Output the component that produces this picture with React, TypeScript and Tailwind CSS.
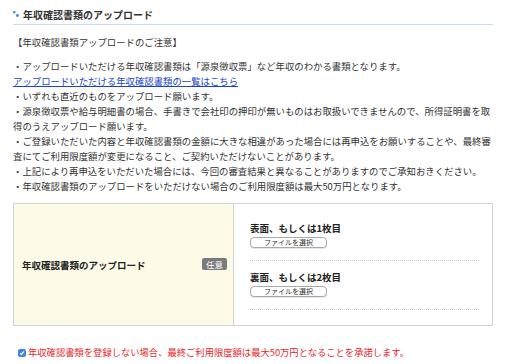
import React from "react";

const notes = [
  "・アップロードいただける年収確認書類は「源泉徴収票」など年収のわかる書類となります。",
  null,
  "・いずれも直近のものをアップロード願います。",
  "・源泉徴収票や給与明細書の場合、手書きで会社印の押印が無いものはお取扱いできませんので、所得証明書を取得のうえアップロード願います。",
  "・ご登録いただいた内容と年収確認書類の金額に大きな相違があった場合には再申込をお願いすることや、最終審査にてご利用限度額が変更になること、ご契約いただけないことがあります。",
  "・上記により再申込をいただいた場合には、今回の審査結果と異なることがありますのでご承知おきください。",
  "・年収確認書類のアップロードをいただけない場合のご利用限度額は最大50万円となります。",
];

function FileRow({ label, last }: { label: string; last?: boolean }) {
  return (
    <div className={last ? "pt-[9px]" : ""}>
      <div className="text-[9.5px] font-bold leading-[14px] text-[#222]">{label}</div>
      <div className="mt-[2px] flex h-[11px] w-[77px] items-center justify-center rounded-[4px] border border-[#aaa] bg-white text-[7px] leading-none text-[#333] shadow-[0_1px_0_#e5e5e5]">
        ファイルを選択
      </div>
      <div className="mt-[12px] border-b border-dotted border-[#ccc]" />
    </div>
  );
}

export default function App() {
  return (
    <div className="h-[364px] w-[526px] bg-white px-[13px] font-['Noto_Sans_CJK_JP','Noto_Sans',sans-serif] text-[#333]">
      {/* Heading */}
      <div className="flex w-[480px] items-center gap-[4px] border-b border-[#c8dbf0] pb-[2px] pt-[8px]">
        <svg width="6" height="6" viewBox="0 0 6 6" className="mt-[-2px]">
          <rect x="0" y="0" width="2.5" height="2.5" fill="#5b9be0" />
          <rect x="3.2" y="3.2" width="2.5" height="2.5" fill="#3a7fd0" />
        </svg>
        <h2 className="text-[10px] font-bold leading-[14px] text-[#333]">年収確認書類のアップロード</h2>
      </div>

      {/* Notes */}
      <div className="w-[480px] text-[9.4px] leading-[15px]">
        <p className="mt-[10px]">【年収確認書類アップロードのご注意】</p>
        <div className="mt-[9px]">
          {notes.map((n, i) =>
            n === null ? (
              <a key={i} href="#" className="block text-[#1a44c8] underline">
                アップロードいただける年収確認書類の一覧はこちら
              </a>
            ) : (
              <p key={i}>{n}</p>
            )
          )}
        </div>
      </div>

      {/* Upload table */}
      <div className="mt-[9px] flex h-[123px] w-[480px] border border-[#d4d4d4]">
        <div className="flex w-[220px] items-center justify-between border-r border-[#d4d4d4] bg-[#fefae8] pl-[8px] pr-[6px]">
          <span className="text-[9.5px] font-bold leading-[14px] text-[#222]">年収確認書類のアップロード</span>
          <span className="mt-[-2px] rounded-[2px] bg-[#7a7a7a] px-[4px] text-[8.5px] leading-[12px] text-white">任意</span>
        </div>
        <div className="flex-1 pl-[16px] pr-[13px] pt-[17px]">
          <FileRow label="表面、もしくは1枚目" />
          <FileRow label="裏面、もしくは2枚目" last />
        </div>
      </div>

      {/* Consent */}
      <div className="mt-[19px] flex items-center gap-[2px] pl-[5px]">
        <span className="flex h-[8px] w-[8px] items-center justify-center rounded-[2px] bg-[#3d86e0]">
          <svg width="6" height="6" viewBox="0 0 6 6">
            <path d="M1 3.2 L2.4 4.6 L5 1.4" fill="none" stroke="white" strokeWidth="1.1" />
          </svg>
        </span>
        <span className="text-[9.3px] leading-[15px] text-[#e8262b]">
          年収確認書類を登録しない場合、最終ご利用限度額は最大50万円となることを承諾します。
        </span>
      </div>
    </div>
  );
}
